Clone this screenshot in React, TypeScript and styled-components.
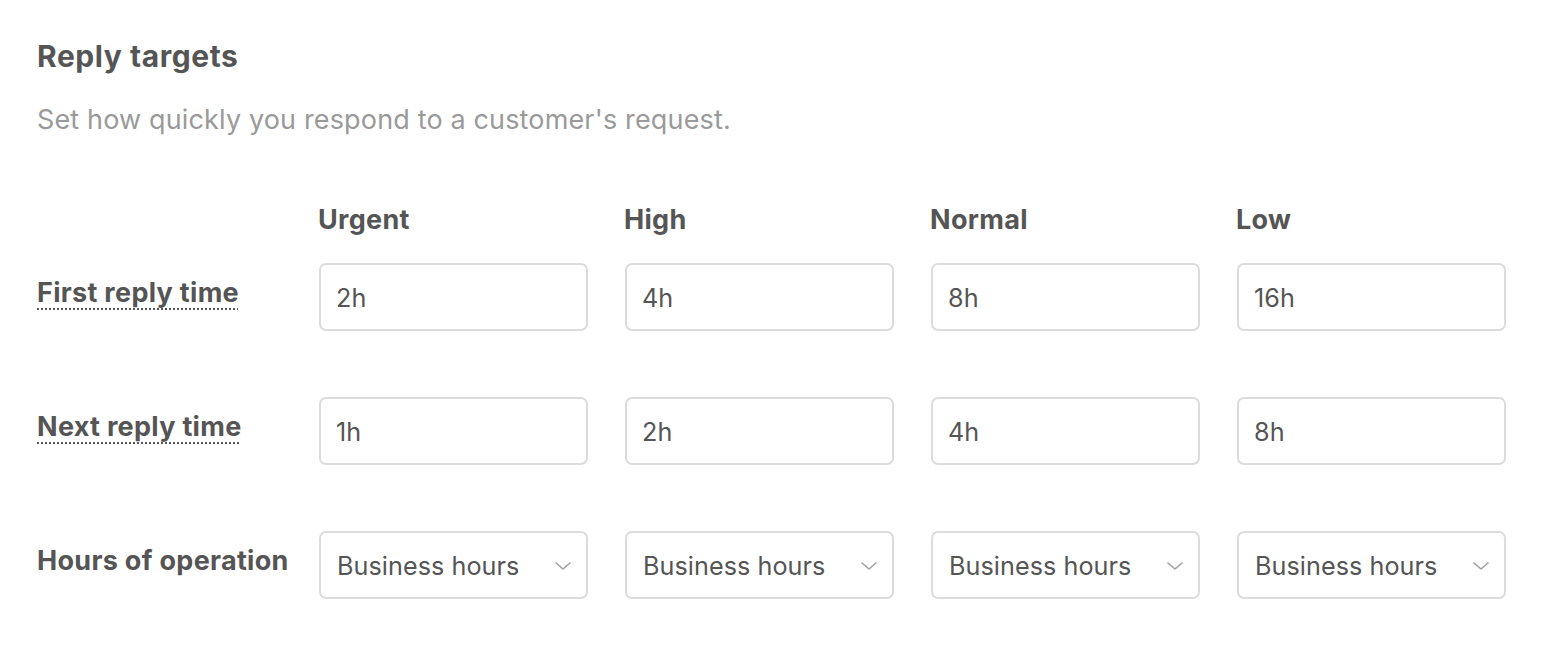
import React from "react";
import styled, { createGlobalStyle } from "styled-components";

const GlobalStyle = createGlobalStyle`
  html, body { margin: 0; padding: 0; background: #ffffff; }
  body { font-family: Inter, "Noto Sans", sans-serif; color: #555555; }
  * { box-sizing: border-box; }
`;

const Page = styled.div`
  padding: 38px 37px 0 37px;
`;

const Title = styled.h2`
  margin: 0;
  font-size: 30px;
  line-height: 36px;
  font-weight: 700;
  color: #555555;
  letter-spacing: 0.55px;
`;

const Description = styled.p`
  margin: 29px 0 0 0;
  font-size: 27px;
  line-height: 34px;
  font-weight: 400;
  color: #9a9a9a;
  letter-spacing: 0.15px;
`;

const Table = styled.div`
  margin-top: 66px;
  display: flex;
  flex-direction: column;
  gap: 66px;
`;

const Row = styled.div`
  display: grid;
  grid-template-columns: 245px repeat(4, 269px);
  column-gap: 37px;
  align-items: center;
`;

const HeaderRow = styled(Row)`
  margin-bottom: -40px;
`;

const ColHeader = styled.div`
  font-size: 27px;
  font-weight: 700;
  line-height: 34px;
  color: #555555;
  letter-spacing: 0.3px;
  margin-left: -1px;
`;

const RowLabel = styled.div<{ $hint?: boolean }>`
  font-size: 27px;
  font-weight: 700;
  line-height: 34px;
  color: #555555;
  margin-bottom: 8px;
  justify-self: start;
  white-space: nowrap;
  letter-spacing: 0.3px;
  ${(p) =>
    p.$hint
      ? `text-decoration: underline dotted #555555; text-decoration-thickness: 2px; text-underline-offset: 6px;`
      : ""}
`;

const Field = styled.div`
  height: 68px;
  border: 2px solid #dcdcdc;
  border-radius: 7px;
  background: #ffffff;
  display: flex;
  align-items: center;
  padding: 2px 16px 0 15px;
  font-size: 25.2px;
  letter-spacing: 0.05px;
  color: #555555;
`;

const SelectField = styled(Field)`
  justify-content: space-between;
  padding: 2px 15px 0 16px;
`;

const Chevron = () => (
  <svg width="16" height="8" viewBox="0 0 16 8" fill="none">
    <path d="M1 1l7 6L15 1" stroke="#a0a0a0" strokeWidth="1.6" strokeLinecap="round" strokeLinejoin="round" />
  </svg>
);

const priorities = ["Urgent", "High", "Normal", "Low"];
const rows = [
  { label: "First reply time", values: ["2h", "4h", "8h", "16h"] },
  { label: "Next reply time", values: ["1h", "2h", "4h", "8h"] },
];

export default function App() {
  return (
    <>
      <GlobalStyle />
      <Page>
        <Title>Reply targets</Title>
        <Description>Set how quickly you respond to a customer's request.</Description>
        <Table>
          <HeaderRow>
            <div />
            {priorities.map((p) => (
              <ColHeader key={p}>{p}</ColHeader>
            ))}
          </HeaderRow>
          {rows.map((r) => (
            <Row key={r.label}>
              <RowLabel $hint>{r.label}</RowLabel>
              {r.values.map((v, i) => (
                <Field key={i}>{v}</Field>
              ))}
            </Row>
          ))}
          <Row>
            <RowLabel>Hours of operation</RowLabel>
            {priorities.map((p) => (
              <SelectField key={p}>
                <span>Business hours</span>
                <Chevron />
              </SelectField>
            ))}
          </Row>
        </Table>
      </Page>
    </>
  );
}
